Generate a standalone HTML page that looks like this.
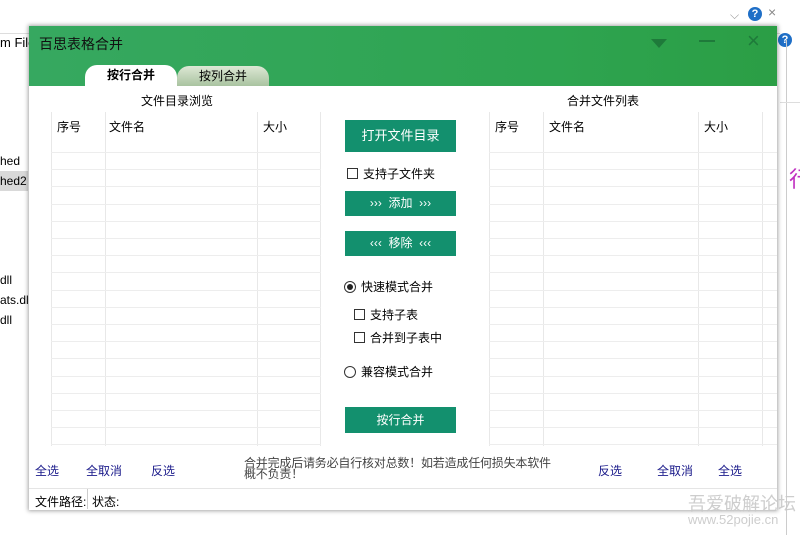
<!DOCTYPE html><html><head><meta charset="utf-8"><style>
*{margin:0;padding:0;box-sizing:border-box}
body{width:800px;height:535px;background:#fff;position:relative;overflow:hidden;font-family:"Liberation Sans","Noto Sans CJK SC",sans-serif;font-size:12px;color:#000}
.a{position:absolute}
.win{position:absolute;left:29px;top:26px;width:748px;height:484px;background:#fff;box-shadow:0 0 4px 1px rgba(0,0,0,.35)}
.hdr{position:absolute;left:0;top:0;width:748px;height:60px;background:linear-gradient(90deg,#36a860,#2ea450 70%,#2b9e45)}
.btn{position:absolute;left:316px;width:111px;background:#13906e;color:#fff;text-align:center;font-size:12px}
.vl{position:absolute;width:1px;background:#e8e8e8}
.hl{position:absolute;height:1px;background:#ededed}
.cb{display:inline-block;width:11px;height:11px;border:1px solid #333;vertical-align:-1px;margin-right:5px;background:#fff}
.lnk{position:absolute;top:436px;color:#1a1a8a}
</style></head><body>
<div class="a" style="left:0;top:33px;width:780px;height:1px;background:#ddd"></div>
<div class="a" style="left:0;top:35px;font-size:13px">m File</div>
<div class="a" style="left:0;top:154px">hed</div>
<div class="a" style="left:0;top:171px;width:28px;height:20px;background:#d9d9d9"></div>
<div class="a" style="left:0;top:174px">hed2</div>
<div class="a" style="left:0;top:273px">dll</div>
<div class="a" style="left:0;top:293px">ats.dll</div>
<div class="a" style="left:0;top:313px">dll</div>
<div class="a" style="left:730px;top:8px;color:#999">⌵</div>
<div class="a" style="left:748px;top:7px;width:14px;height:14px;border-radius:50%;background:#1f6fc7;color:#fff;font-size:11px;text-align:center;line-height:14px;font-weight:bold">?</div>
<div class="a" style="left:768px;top:4px;color:#888;font-size:14px">×</div>
<div class="a" style="left:778px;top:33px;width:14px;height:14px;border-radius:50%;background:#1f6fc7;color:#fff;font-size:11px;text-align:center;line-height:14px;font-weight:bold">?</div>
<div class="a" style="left:786px;top:40px;width:1px;height:495px;background:#ccc"></div>
<div class="a" style="left:780px;top:102px;width:20px;height:1px;background:#ddd"></div>
<div class="a" style="left:789px;top:162px;color:#c030c0;font-size:22px">行</div>
<div class="win">
<div class="hdr"></div>
<div class="a" style="left:10px;top:8px;font-size:14px;color:#111">百思表格合并</div>
<div class="a" style="left:622px;top:13px;width:0;height:0;border-left:8px solid transparent;border-right:8px solid transparent;border-top:9px solid #1e7a3a"></div>
<div class="a" style="left:670px;top:14px;width:16px;height:2px;background:#1e7a3a"></div>
<div class="a" style="left:718px;top:2px;font-size:22px;color:#1e7a3a">×</div>
<div class="a" style="left:56px;top:39px;width:92px;height:21px;background:#fff;border-radius:12px 12px 0 0;text-align:center;font-weight:bold;line-height:21px;font-size:12px">按行合并</div>
<div class="a" style="left:148px;top:40px;width:92px;height:20px;background:linear-gradient(#dde8d5,#a9c3a0);border-radius:12px 12px 0 0;text-align:center;line-height:20px;font-size:12px">按列合并</div>
<div class="a" style="left:112px;top:66px">文件目录浏览</div>
<div class="a" style="left:538px;top:66px">合并文件列表</div>
<div class="vl" style="left:22px;top:86px;height:334px"></div>
<div class="vl" style="left:76px;top:86px;height:334px"></div>
<div class="vl" style="left:228px;top:86px;height:334px"></div>
<div class="vl" style="left:291px;top:86px;height:334px"></div>
<div class="vl" style="left:460px;top:86px;height:334px"></div>
<div class="vl" style="left:514px;top:86px;height:334px"></div>
<div class="vl" style="left:669px;top:86px;height:334px"></div>
<div class="vl" style="left:733px;top:86px;height:334px"></div>
<div class="a" style="left:28px;top:92px">序号</div>
<div class="a" style="left:80px;top:92px">文件名</div>
<div class="a" style="left:234px;top:92px">大小</div>
<div class="a" style="left:466px;top:92px">序号</div>
<div class="a" style="left:520px;top:92px">文件名</div>
<div class="a" style="left:675px;top:92px">大小</div>
<div id="rows"></div>
<div class="btn" style="top:94px;height:32px;line-height:32px;font-size:13px">打开文件目录</div>
<div class="a" style="left:318px;top:139px;background:#fff"><span class="cb"></span>支持子文件夹</div>
<div class="btn" style="top:165px;height:25px;line-height:25px">›››&nbsp; 添加 &nbsp;›››</div>
<div class="btn" style="top:205px;height:25px;line-height:25px">‹‹‹&nbsp; 移除 &nbsp;‹‹‹</div>
<div class="a" style="left:315px;top:252px;background:#fff"><span style="display:inline-block;width:12px;height:12px;border:1px solid #333;border-radius:50%;vertical-align:-2px;margin-right:5px;position:relative"><span style="position:absolute;left:2px;top:2px;width:6px;height:6px;border-radius:50%;background:#222"></span></span>快速模式合并</div>
<div class="a" style="left:325px;top:280px;background:#fff"><span class="cb"></span>支持子表</div>
<div class="a" style="left:325px;top:303px;background:#fff"><span class="cb"></span>合并到子表中</div>
<div class="a" style="left:315px;top:337px;background:#fff"><span style="display:inline-block;width:12px;height:12px;border:1px solid #333;border-radius:50%;vertical-align:-2px;margin-right:5px"></span>兼容模式合并</div>
<div class="btn" style="top:381px;height:26px;line-height:26px">按行合并</div>
<div class="lnk" style="left:6px">全选</div>
<div class="lnk" style="left:57px">全取消</div>
<div class="lnk" style="left:122px">反选</div>
<div class="a" style="left:215px;top:432px;color:#444;line-height:11px;font-size:12px;white-space:nowrap;letter-spacing:-0.2px">合并完成后请务必自行核对总数！如若造成任何损失本软件<br>概不负责！</div>
<div class="lnk" style="left:569px">反选</div>
<div class="lnk" style="left:628px">全取消</div>
<div class="lnk" style="left:689px">全选</div>
<div class="a" style="left:0;top:462px;width:748px;height:1px;background:#e5e5e5"></div>
<div class="a" style="left:6px;top:467px">文件路径:</div>
<div class="a" style="left:58px;top:463px;width:1px;height:20px;background:#ccc"></div>
<div class="a" style="left:63px;top:467px">状态:</div>
</div>
<div class="a" style="left:688px;top:490px;color:rgba(200,200,200,.9);font-size:18px">吾爱破解论坛</div>
<div class="a" style="left:688px;top:512px;color:rgba(200,200,200,.9);font-size:13px">www.52pojie.cn</div>
<script>
var h='';for(var y=126;y<420;y+=17.2){h+='<div class="hl" style="left:22px;top:'+Math.round(y)+'px;width:270px"></div><div class="hl" style="left:460px;top:'+Math.round(y)+'px;width:288px"></div>';}
document.getElementById('rows').innerHTML=h;
</script>
</body></html>
